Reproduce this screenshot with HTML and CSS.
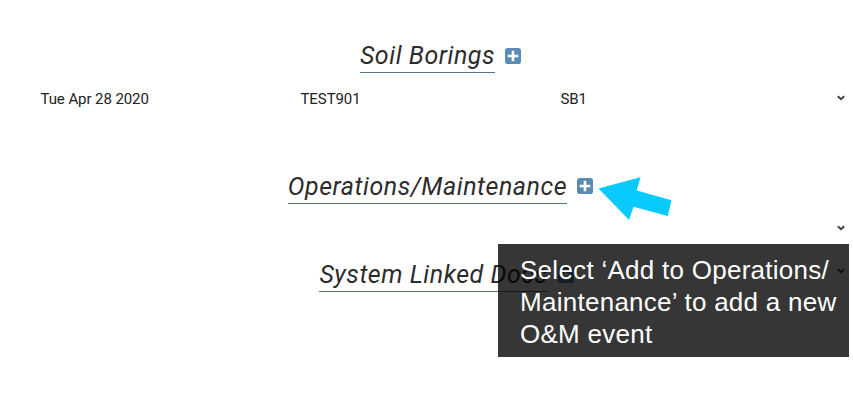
FILE: index.html
```html
<!DOCTYPE html>
<html lang="en">
<head>
<meta charset="utf-8">
<title>System records</title>
<link rel="stylesheet" href="styles.css">
</head>
<body>
<svg class="defs" aria-hidden="true">
  <symbol id="plus" viewBox="0 0 16 16">
    <rect width="16" height="16" rx="2.8" fill="#5a8bb5"/>
    <path d="M6.7 2.7h2.6v4H13.3v2.6H9.3V13.3H6.7V9.3H2.7V6.7h4z" fill="#fff"/>
  </symbol>
  <symbol id="chevron" viewBox="0 0 8 6">
    <path d="M.8 1.2L4 4.2L7.2 1.2" fill="none" stroke="#444" stroke-width="2"/>
  </symbol>
</svg>
<main class="page">
  <section class="section borings">
    <header class="heading"><h2 class="title">Soil Borings</h2><svg class="add"><use href="#plus"/></svg></header>
    <div class="row">
      <span class="cell">Tue Apr 28 2020</span>
      <span class="cell">TEST901</span>
      <span class="cell">SB1</span>
      <svg class="chevron"><use href="#chevron"/></svg>
    </div>
  </section>
  <section class="section maintenance">
    <header class="heading"><h2 class="title">Operations/Maintenance</h2><svg class="add"><use href="#plus"/></svg></header>
    <div class="row">
      <svg class="chevron"><use href="#chevron"/></svg>
    </div>
  </section>
  <section class="section docs">
    <header class="heading"><h2 class="title">System Linked Docs</h2><svg class="add"><use href="#plus"/></svg></header>
    <svg class="chevron"><use href="#chevron"/></svg>
  </section>
</main>
<svg class="arrow" viewBox="0 0 74 44"><path d="M.5 12.5L42.5 1.2L38.7 14.5L73.5 24.3L69.8 40L35.5 30.8L31 44z" fill="#08caff"/></svg>
<aside class="callout">Select ‘Add to Operations/<br>Maintenance’ to add a new<br>O&amp;M event</aside>
</body>
</html>
```
FILE: styles.css
```css
* { box-sizing: border-box; }
body {
  margin: 0;
  height: 400px;
  overflow: hidden;
  background: #fff;
  color: #212121;
  font-family: Roboto, "Liberation Sans", sans-serif;
}
.defs { display: none; }
.page { padding-top: 40px; }
.heading {
  display: flex;
  justify-content: center;
  gap: 10px;
  width: 881px;
  height: 33px;
}
.title {
  margin: 0;
  height: 33px;
  border-bottom: 1px solid #54798f;
  color: #2c2c2c;
  font-size: 25px;
  font-style: italic;
  font-weight: 400;
  line-height: 31px;
  letter-spacing: 0.53px;
  white-space: nowrap;
}
.add {
  flex: none;
  width: 16px;
  height: 16px;
  margin-top: 7.5px;
}
.borings { height: 131px; }
.maintenance { height: 88px; }
.maintenance .add { margin-top: 7px; }
.row {
  display: flex;
  align-items: center;
  height: 20px;
  margin-top: 16px;
  padding: 0 8px 0 40.5px;
  font-size: 15px;
  letter-spacing: -0.08px;
}
.maintenance .row { margin-top: 14px; }
.cell { width: 260px; flex: none; }
.chevron {
  flex: none;
  width: 8px;
  height: 6px;
  margin-left: auto;
}
.borings .chevron { margin-left: -3px; margin-bottom: 3px; }
.borings .cell:nth-of-type(3) { width: 279.5px; }
.docs { display: flex; }
.docs .heading { width: 837px; padding-left: 56px; }
.docs .chevron { margin: 9px 0 0; }
.arrow {
  position: absolute;
  left: 598px;
  top: 176px;
  width: 74px;
  height: 44px;
}
.callout {
  position: absolute;
  left: 498px;
  top: 244px;
  width: 351px;
  height: 113px;
  padding: 10px 0 0 22px;
  background: rgba(0, 0, 0, 0.79);
  color: #fff;
  font: 26px/32px "Liberation Sans", Arial, sans-serif;
  letter-spacing: 0.27px;
  white-space: nowrap;
}
```
